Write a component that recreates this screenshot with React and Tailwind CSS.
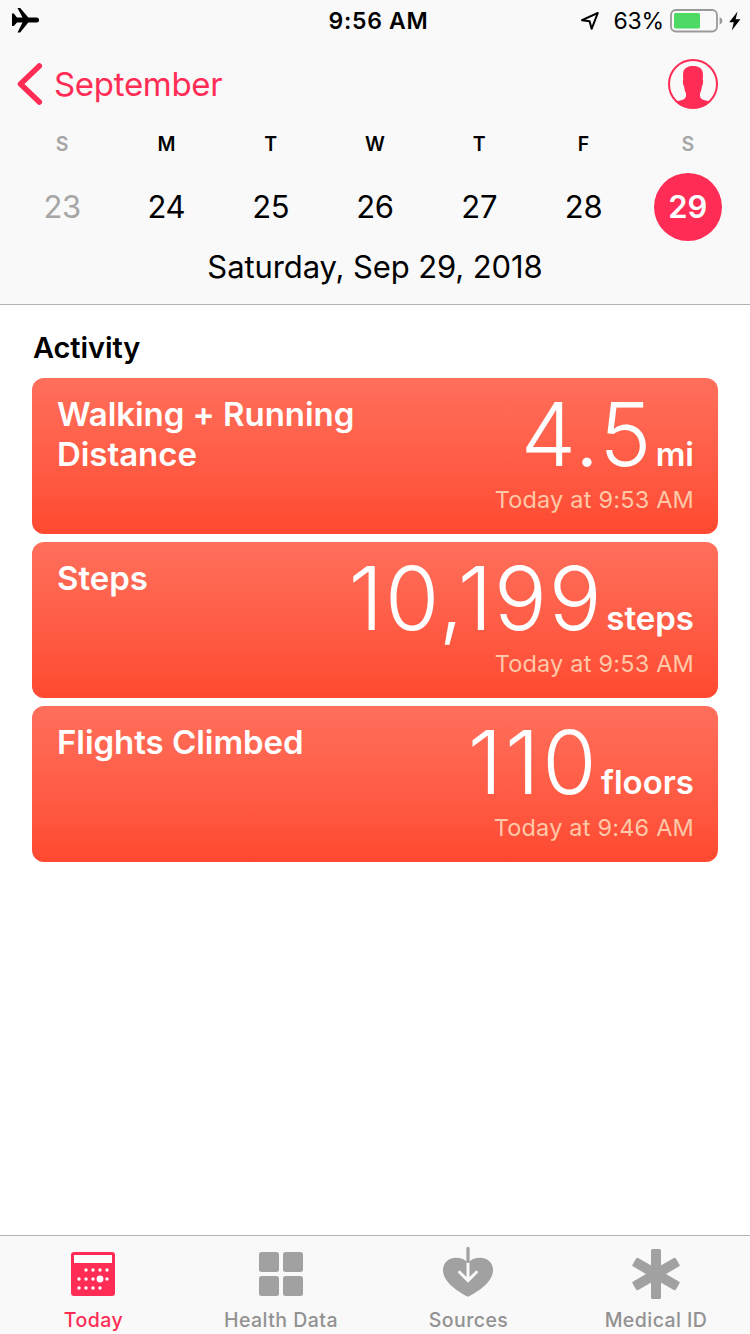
import React from "react";

const days = [
  { d: "S", n: "23", muted: true },
  { d: "M", n: "24" },
  { d: "T", n: "25" },
  { d: "W", n: "26" },
  { d: "T", n: "27" },
  { d: "F", n: "28" },
  { d: "S", n: "29", muted: true, selected: true },
];

const cards = [
  { title: "Walking + Running Distance", value: "4.5", unit: "mi", time: "Today at 9:53 AM", spacing: "tracking-[1.2px] mr-[3px]" },
  { title: "Steps", value: "10,199", unit: "steps", time: "Today at 9:53 AM", spacing: "tracking-[1.7px] mr-[3px]" },
  { title: "Flights Climbed", value: "110", unit: "floors", time: "Today at 9:46 AM", spacing: "tracking-[2.6px] mr-[2px]" },
];

function StatusBar() {
  return (
    <div className="grid h-[41px] grid-cols-3 items-center pl-[11px] pr-[9px]">
      <svg width="28" height="26" viewBox="0 0 28 26" className="-mt-0.5">
        <path d="M1 6.5H2.8L6 10.5H11.5L6.5 1H9.2L17.3 10.5H25.5A2.5 2.5 0 0 1 25.5 15.5H17.3L9.2 25.5H6.5L11.5 15.5H6L2.8 19H1Z" fill="#000" />
      </svg>
      <div className="pl-[5px] pt-px text-center text-[23px] font-semibold tracking-[0.7px]">9:56 AM</div>
      <div className="flex items-center justify-end">
        <svg width="20" height="20" viewBox="0 0 20 20" className="mr-[14px]">
          <path d="M17.8 2L2 9.2L9.6 10.2L11.6 17.8Z" fill="none" stroke="#000" strokeWidth="2" strokeLinejoin="round" />
        </svg>
        <span className="pt-px text-[23px] tracking-[-0.2px]">63%</span>
        <svg width="54" height="24" viewBox="0 0 54 24" className="ml-[6px]">
          <rect x="1" y="1" width="46" height="21.5" rx="5" fill="none" stroke="#999" strokeWidth="1.8" />
          <rect x="4" y="4" width="26" height="15.5" rx="1.5" fill="#4cd964" />
          <path d="M49.6 8.2A4 4 0 0 1 49.6 15.8Z" fill="#999" />
        </svg>
        <svg width="12" height="20" viewBox="0 0 12 20" className="ml-[5px]">
          <path d="M8.6 0.5L0.2 11.2H4.8L2.8 19.5L11.4 8.2H6.6Z" fill="#000" />
        </svg>
      </div>
    </div>
  );
}

function Avatar() {
  return (
    <svg width="52" height="52" viewBox="0 0 52 52">
      <defs><clipPath id="face"><circle cx="26" cy="26" r="24.6" /></clipPath></defs>
      <circle cx="26" cy="26" r="24" fill="none" stroke="#ff2d55" strokeWidth="2" />
      <path clipPath="url(#face)" d="M26 8C32 8 36 10.5 36 17L35.8 22C36.5 22.5 36 27 35 28.2C34.6 31 33.8 33.500 33 35.500C32.600 40.500 34 42.300 42.500 43.200L44 52H8L9.500 43.200C18 42.300 19.400 40.500 19 35.500C18.200 33.500 17.400 31 17 28.200C16 27 15.500 22.500 16.200 22L16 17C16 10.500 20 8 26 8Z" fill="#ff2d55" />
    </svg>
  );
}

function Card({ title, value, unit, time, spacing }) {
  return (
    <section className="flex h-[156px] justify-between rounded-[12px] bg-gradient-to-b from-[#ff6f5b] to-[#ff4930] pl-[25px] pr-6 pt-4 text-white">
      <h3 className="w-[310px] text-[33px] font-semibold leading-[40px] tracking-[-0.05px]">{title}</h3>
      <div className="flex flex-col items-end">
        <div className="flex h-[80px] items-baseline leading-[80px]">
          <span className={"text-[88px] font-light " + spacing}>{value}</span>
          <span className="text-[33px] font-semibold">{unit}</span>
        </div>
        <div className="mt-[13px] text-[23.5px] leading-[26px] tracking-[0.2px] text-[#ffc8a8]">{time}</div>
      </div>
    </section>
  );
}

function CalendarIcon() {
  const dots = [[15, 18], [22, 18], [29, 18], [36, 18], [8, 27], [15, 27], [22, 27], [36, 27], [8, 36], [15, 36], [22, 36], [29, 36]];
  return (
    <svg width="44" height="44" viewBox="0 0 44 44" className="mr-px">
      <rect width="44" height="44" rx="3" fill="#ff2d55" />
      <rect x="3" y="3" width="38" height="8" fill="#fff" />
      {dots.map(([x, y]) => <circle key={x + "-" + y} cx={x} cy={y} r="1.7" fill="#fff" />)}
      <circle cx="29" cy="27" r="3.4" fill="#fff" />
    </svg>
  );
}

function GridIcon() {
  return (
    <svg width="44" height="44" viewBox="0 0 44 44" fill="#a1a1a1">
      <rect width="20" height="20" rx="2.5" />
      <rect x="24" width="20" height="20" rx="2.5" />
      <rect y="24" width="20" height="20" rx="2.5" />
      <rect x="24" y="24" width="20" height="20" rx="2.5" />
    </svg>
  );
}

function SourcesIcon() {
  return (
    <svg width="50" height="50" viewBox="0 0 50 50" className="mb-1 mr-px">
      <path d="M25 49.8C14 44 0 35 0 23C0 16 5.5 10.8 12.5 10.8C18 10.8 22.5 12.5 25 16C27.5 12.5 32 10.8 37.5 10.8C44.5 10.8 50 16 50 23C50 35 36 44 25 49.8Z" fill="#a1a1a1" />
      <path d="M25 16V33M16.6 25.2L25 33.6L33.4 25.2" fill="none" stroke="#f9f9f9" strokeWidth="3" strokeLinecap="round" />
      <path d="M25 1.5V14.5" stroke="#a1a1a1" strokeWidth="3.2" strokeLinecap="round" />
    </svg>
  );
}

function MedicalIcon() {
  return (
    <svg width="50" height="50" viewBox="-25 -25 50 50" fill="#a1a1a1">
      <rect x="-5" y="-25" width="10" height="50" rx="1.5" />
      <rect x="-5" y="-25" width="10" height="50" rx="1.5" transform="rotate(60)" />
      <rect x="-5" y="-25" width="10" height="50" rx="1.5" transform="rotate(-60)" />
    </svg>
  );
}

const tabs = [
  { label: "Today", Icon: CalendarIcon, active: true },
  { label: "Health Data", Icon: GridIcon },
  { label: "Sources", Icon: SourcesIcon },
  { label: "Medical ID", Icon: MedicalIcon },
];

export default function App() {
  return (
    <div className="flex h-[1334px] w-[750px] flex-col overflow-hidden bg-white font-['Inter',sans-serif] text-black">
      <header className="h-[305px] border-b border-[#b2b2b2] bg-[#f9f9f9]">
        <StatusBar />
        <div className="flex h-[86px] items-center justify-between pl-[17px] pr-[31px] text-[#ff2d55]">
          <div className="flex items-center">
            <svg width="26" height="42" viewBox="0 0 26 42"><path d="M22.3 3L3.5 21L22.3 39" fill="none" stroke="#ff2d55" strokeWidth="5.5" strokeLinecap="round" strokeLinejoin="round" /></svg>
            <span className="ml-[11px] text-[33px] leading-[48px] tracking-[-0.3px]">September</span>
          </div>
          <Avatar />
        </div>
        <div className="grid grid-cols-7 px-[10px]">
          {days.map((x, i) => (
            <div key={i} className="flex flex-col items-center">
              <div className={x.muted ? "h-[34px] text-[19.5px] font-semibold leading-[34px] text-[#a6a6a6]" : "h-[34px] text-[19.5px] font-semibold leading-[34px]"}>{x.d}</div>
              <div className="flex h-[92px] items-center text-[31px] leading-[46px]">
                <div className={x.selected ? "flex size-[68px] items-center justify-center rounded-full bg-[#ff2d55] font-semibold text-white" : x.muted ? "tracking-[-0.3px] text-[#a6a6a6]" : "tracking-[-0.3px]"}>{x.n}</div>
              </div>
            </div>
          ))}
        </div>
        <div className="text-center text-[31px] leading-[28px] tracking-[-0.1px]">Saturday, Sep 29, 2018</div>
      </header>
      <main className="flex-1 px-8 pt-[23px]">
        <h2 className="pl-px text-[29px] font-semibold leading-[40px] tracking-[-0.1px]">Activity</h2>
        <div className="mt-[10px] flex flex-col gap-2">
          {cards.map((c) => <Card key={c.title} {...c} />)}
        </div>
      </main>
      <nav className="grid h-[99px] grid-cols-[187px_188px_187px_188px] border-t border-[#b2b2b2] bg-[#f9f9f9]">
        {tabs.map(({ label, Icon, active }) => (
          <div key={label} className={active ? "flex flex-col items-center text-[#ff2d55]" : "flex flex-col items-center text-[#929292]"}>
            <div className="flex h-[76px] items-center"><Icon /></div>
            <div className="-mt-1 text-[19.5px] font-medium leading-6 tracking-[0.45px]">{label}</div>
          </div>
        ))}
      </nav>
    </div>
  );
}
